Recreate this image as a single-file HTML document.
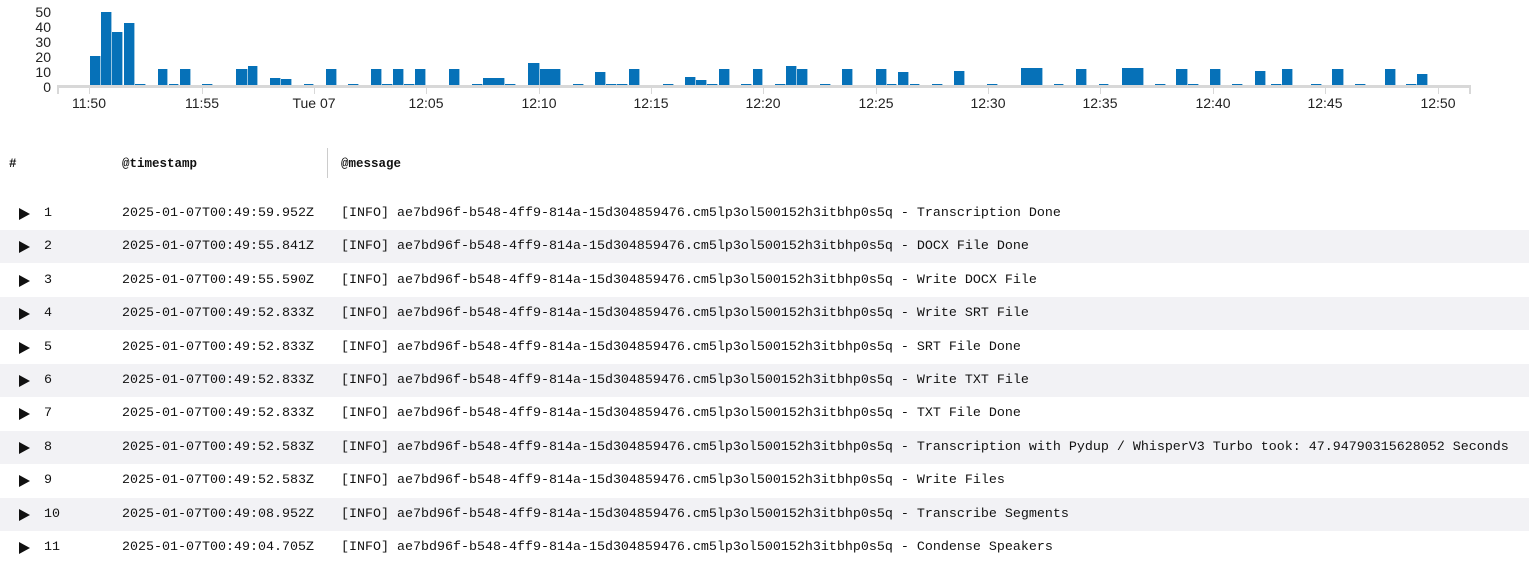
<!DOCTYPE html>
<html><head><meta charset="utf-8"><style>
body{margin:0;width:1529px;height:560px;background:#fff;overflow:hidden;position:relative;font-family:"Liberation Sans",sans-serif}
svg text{font-family:"Liberation Sans",sans-serif;font-size:14px;fill:#222}
.mono{font-family:"Liberation Mono",monospace;font-size:13.34px;color:#111}
.hdr{position:absolute;top:157px;font-weight:bold;font-size:12.5px}
.row{position:absolute;left:0;width:1529px;height:33px}
.row.g{background:#f2f2f5}
.row span{position:absolute;top:0;line-height:33px;white-space:pre}
.tri{position:absolute;left:19px;top:11px;width:0;height:0;border-left:11px solid #111;border-top:6.5px solid transparent;border-bottom:6.5px solid transparent}
</style></head><body>
<svg width="1529" height="120" style="position:absolute;left:0;top:0">
<g text-anchor="end">
<text x="51" y="17">50</text><text x="51" y="32">40</text><text x="51" y="47">30</text><text x="51" y="62">20</text><text x="51" y="77">10</text><text x="51" y="92">0</text>
</g>
<rect x="57" y="85" width="1414" height="3" fill="#d8d8d8"/>
<g fill="#d8d8d8">
<rect x="57" y="85" width="2" height="9"/><rect x="1469" y="85" width="2" height="9"/>
<rect x="89" y="88" width="1" height="6"/><rect x="202" y="88" width="1" height="6"/><rect x="314" y="88" width="1" height="6"/><rect x="426" y="88" width="1" height="6"/><rect x="539" y="88" width="1" height="6"/><rect x="651" y="88" width="1" height="6"/><rect x="763" y="88" width="1" height="6"/><rect x="876" y="88" width="1" height="6"/><rect x="988" y="88" width="1" height="6"/><rect x="1100" y="88" width="1" height="6"/><rect x="1213" y="88" width="1" height="6"/><rect x="1325" y="88" width="1" height="6"/><rect x="1438" y="88" width="1" height="6"/>
</g>
<g text-anchor="middle">
<text x="89" y="108">11:50</text><text x="202" y="108">11:55</text><text x="314" y="108">Tue 07</text><text x="426" y="108">12:05</text><text x="539" y="108">12:10</text><text x="651" y="108">12:15</text><text x="763" y="108">12:20</text><text x="876" y="108">12:25</text><text x="988" y="108">12:30</text><text x="1100" y="108">12:35</text><text x="1213" y="108">12:40</text><text x="1325" y="108">12:45</text><text x="1438" y="108">12:50</text>
</g>
<g fill="#0671b8" id="bars"></g>
</svg>
<script>
var b=[[90,11,56],[101,11,12],[112,11,32],[124,11,23],[135,11,84],[158,10,69],[169,10,84],[180,11,69],[202,11,84],[236,12,69],[248,10,66],[259,10,86],[270,11,78],[281,11,79],[304,10,84],[326,11,69],[348,11,84],[371,11,69],[382,11,84],[393,11,69],[404,11,84],[415,11,69],[427,21,86],[449,11,69],[472,11,84],[483,22,78],[505,11,84],[528,12,63],[540,21,69],[573,11,84],[595,11,72],[606,11,84],[617,11,84],[629,11,69],[663,11,84],[685,11,77],[696,11,80],[707,11,84],[719,11,69],[741,11,84],[753,10,69],[775,11,84],[786,11,66],[797,11,69],[820,11,84],[842,11,69],[853,22,86],[876,11,69],[887,10,84],[898,11,72],[910,10,84],[932,11,84],[954,11,71],[966,10,86],[987,11,84],[1021,22,68],[1054,10,84],[1076,11,69],[1099,10,84],[1122,22,68],[1155,11,84],[1176,12,69],[1188,11,84],[1210,11,69],[1232,11,84],[1255,11,71],[1266,5,86],[1271,11,84],[1282,11,69],[1311,11,84],[1332,12,69],[1355,11,84],[1385,11,69],[1406,11,84],[1417,11,74]];
var g=document.getElementById('bars'),s='';
b.forEach(function(a){s+='<rect x="'+a[0]+'" y="'+a[2]+'" width="'+(a[1]-0.6)+'" height="'+(85-a[2])+'"/>';});
g.innerHTML=s;
</script>
<div class="mono hdr" style="left:9px">#</div>
<div class="mono hdr" style="left:122px">@timestamp</div>
<div class="mono hdr" style="left:341px">@message</div>
<div style="position:absolute;left:327px;top:148px;width:1px;height:30px;background:#ccc"></div>
<div id="rows"></div>
<script>
var m="[INFO] ae7bd96f-b548-4ff9-814a-15d304859476.cm5lp3ol500152h3itbhp0s5q - ";
var r=[["2025-01-07T00:49:59.952Z","Transcription Done"],["2025-01-07T00:49:55.841Z","DOCX File Done"],["2025-01-07T00:49:55.590Z","Write DOCX File"],["2025-01-07T00:49:52.833Z","Write SRT File"],["2025-01-07T00:49:52.833Z","SRT File Done"],["2025-01-07T00:49:52.833Z","Write TXT File"],["2025-01-07T00:49:52.833Z","TXT File Done"],["2025-01-07T00:49:52.583Z","Transcription with Pydup / WhisperV3 Turbo took: 47.94790315628052 Seconds"],["2025-01-07T00:49:52.583Z","Write Files"],["2025-01-07T00:49:08.952Z","Transcribe Segments"],["2025-01-07T00:49:04.705Z","Condense Speakers"]];
var h='';
r.forEach(function(x,i){var top=197+i*33.4;h+='<div class="row mono'+(i%2?' g':'')+'" style="top:'+top+'px"><div class="tri"></div><span style="left:44px">'+(i+1)+'</span><span style="left:122px">'+x[0]+'</span><span style="left:341px">'+m+x[1]+'</span></div>';});
document.getElementById('rows').innerHTML=h;
</script>
</body></html>
